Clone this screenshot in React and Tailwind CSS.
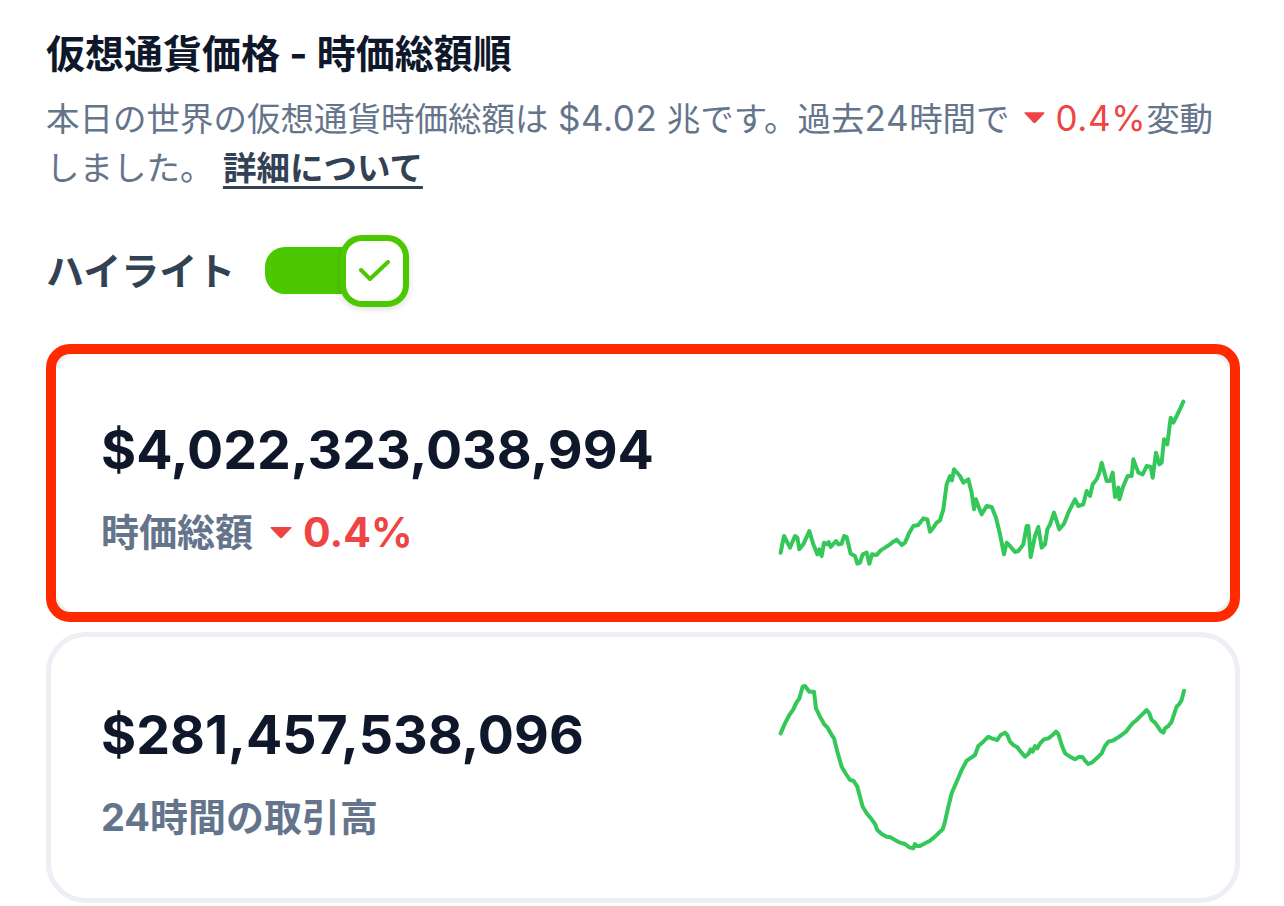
import React from "react";

const FONT = { fontFamily: 'Inter, "Noto Sans CJK JP", sans-serif' };

const chart1 =
  "62,515 72,465 90,500 105,465 112,470 118,505 130,490 148,450 160,490 172,520 178,505 185,525 192,485 200,490 206,483 212,498 228,480 235,490 245,488 252,465 260,468 272,518 285,525 292,548 300,545 308,520 320,515 328,548 336,520 350,522 362,508 375,500 390,490 400,482 410,476 425,492 435,485 448,455 460,435 475,432 490,412 502,415 510,452 520,440 530,425 540,418 550,385 560,310 570,285 576,298 582,265 600,285 610,305 625,295 635,335 642,385 648,355 655,375 665,400 680,375 695,378 708,410 720,460 732,520 740,485 750,495 765,513 775,510 790,490 800,435 805,435 812,528 825,465 835,438 845,500 855,490 862,445 870,430 882,395 898,445 912,428 925,395 945,355 955,375 970,370 980,330 990,345 998,310 1010,295 1018,275 1025,245 1040,300 1050,300 1058,275 1065,348 1075,320 1078,355 1090,315 1103,285 1115,285 1120,235 1135,275 1148,280 1160,255 1172,258 1178,290 1188,215 1198,250 1205,245 1212,175 1222,190 1232,110 1240,125 1250,105 1262,80 1270,62";

const chart2 =
  "62,190 75,160 88,135 100,118 108,100 118,85 128,50 135,48 148,65 162,65 168,115 180,140 192,162 202,172 215,195 222,205 232,245 245,290 258,312 270,330 280,332 292,350 300,380 308,410 320,430 335,448 345,462 352,480 365,492 380,500 392,502 405,510 420,518 435,522 448,532 460,535 465,522 470,528 480,528 495,520 510,512 525,500 535,490 548,478 555,455 565,410 575,370 590,335 605,300 620,272 635,262 645,255 655,228 670,215 685,200 695,205 712,210 722,195 735,188 742,195 750,215 760,225 772,232 782,245 795,260 805,252 812,238 818,245 825,228 832,235 840,220 852,208 865,205 878,195 888,185 895,192 905,225 915,250 930,260 945,268 958,260 968,262 975,272 985,282 995,278 1010,265 1025,250 1035,228 1045,215 1058,212 1070,205 1085,195 1098,185 1108,172 1118,160 1130,150 1140,140 1150,130 1160,120 1168,130 1175,150 1185,158 1195,172 1202,183 1210,188 1215,175 1225,168 1235,155 1243,130 1250,110 1258,102 1265,90 1272,62";

function Caret({ w, h }) {
  return (
    <svg width={w} height={h} viewBox="0 0 24 13" className="inline-block shrink-0">
      <path
        d="M2.5 1 H21.5 Q23.5 1 22 2.6 L13.4 11.6 Q12 13 10.6 11.6 L2 2.6 Q0.5 1 2.5 1 Z"
        fill="#ef4444"
      />
    </svg>
  );
}

function Spark({ points, vb }) {
  return (
    <svg width="405" height="165" viewBox={vb} className="shrink-0 overflow-visible">
      <polyline
        points={points}
        fill="none"
        stroke="#34c759"
        strokeWidth="12"
        strokeLinejoin="round"
        strokeLinecap="round"
      />
    </svg>
  );
}

function Card({ value, label, children, points, vb, height }) {
  return (
    <div
      className={`flex items-center justify-between rounded-[40px] border-[5px] border-[#eceff3] bg-white pl-[50px] pr-[50px] ${height}`}
    >
      <div className="flex flex-col pt-[10px]">
        <div className="text-[53.7px] font-bold leading-[60px] text-[#0f172a]">{value}</div>
        <div className="mt-[28px] flex items-center text-[38px] font-bold leading-[48px] text-[#64748b]">
          {label}
          {children}
        </div>
      </div>
      <Spark points={points} vb={vb} />
    </div>
  );
}

const LATIN = "text-[35px] tracking-[0.6px]";

export default function App() {
  return (
    <div className="min-h-[906px] w-[1284px] bg-white pl-[46px] pr-[44px] pt-[30px]" style={FONT}>
      <h1 className="text-[39px] font-bold leading-[48px] text-[#0f172a]">仮想通貨価格 - 時価総額順</h1>
      <p className="mt-[16px] text-[33.5px] leading-[49px] text-[#64748b]">
        <span className="whitespace-nowrap">
          本日の世界の仮想通貨時価総額は <span className={LATIN}>$4.02</span> 兆です。過去
          <span className={LATIN}>24</span>時間で{" "}
          <span className="ml-[4px] inline-flex translate-y-[-4px] items-center align-middle">
            <Caret w={23} h={13} />
          </span>{" "}
          <span className={`${LATIN} text-[#ef4444]`}>0.4%</span>変動
        </span>
        <br />
        しました。{" "}
        <a className="font-bold text-[#334155] underline decoration-[3px] underline-offset-[6px]">詳細について</a>
      </p>

      <div className="mt-[42px] flex items-center">
        <span className="text-[38px] font-bold leading-[48px] text-[#334155]">ハイライト</span>
        <div className="relative ml-[30px] h-[72px] w-[145px]">
          <div className="absolute left-0 top-[12px] h-[47px] w-[130px] rounded-[20px] bg-[#4bc800]" />
          <div className="absolute left-[75px] top-0 flex h-[72px] w-[69px] items-center justify-center rounded-[22px] border-[6px] border-[#4bc800] bg-white shadow-[0_2px_6px_rgba(0,0,0,0.15)]">
            <svg width="33" height="22" viewBox="0 0 33 22">
              <path
                d="M3 10 L12 19 L30 2"
                fill="none"
                stroke="#4bc800"
                strokeWidth="4"
                strokeLinecap="round"
                strokeLinejoin="round"
              />
            </svg>
          </div>
        </div>
      </div>

      <div className="relative mt-[39px]">
        <Card
          value="$4,022,323,038,994"
          label="時価総額"
          points={chart1}
          vb="60 60 1215 495"
          height="h-[274px]"
        >
          <span className="ml-[16px] mr-[10px] flex items-center">
            <Caret w={24} h={13} />
          </span>
          <span className="text-[41px] text-[#ef4444]">0.4%</span>
        </Card>
        <div className="pointer-events-none absolute inset-x-0 -bottom-[2px] -top-[2px] rounded-[24px] border-[10px] border-[#ff2a00]" />
      </div>

      <div className="mt-[12px]">
        <Card
          value="$281,457,538,096"
          label="24時間の取引高"
          points={chart2}
          vb="60 45 1215 495"
          height="h-[271px]"
        />
      </div>
    </div>
  );
}
